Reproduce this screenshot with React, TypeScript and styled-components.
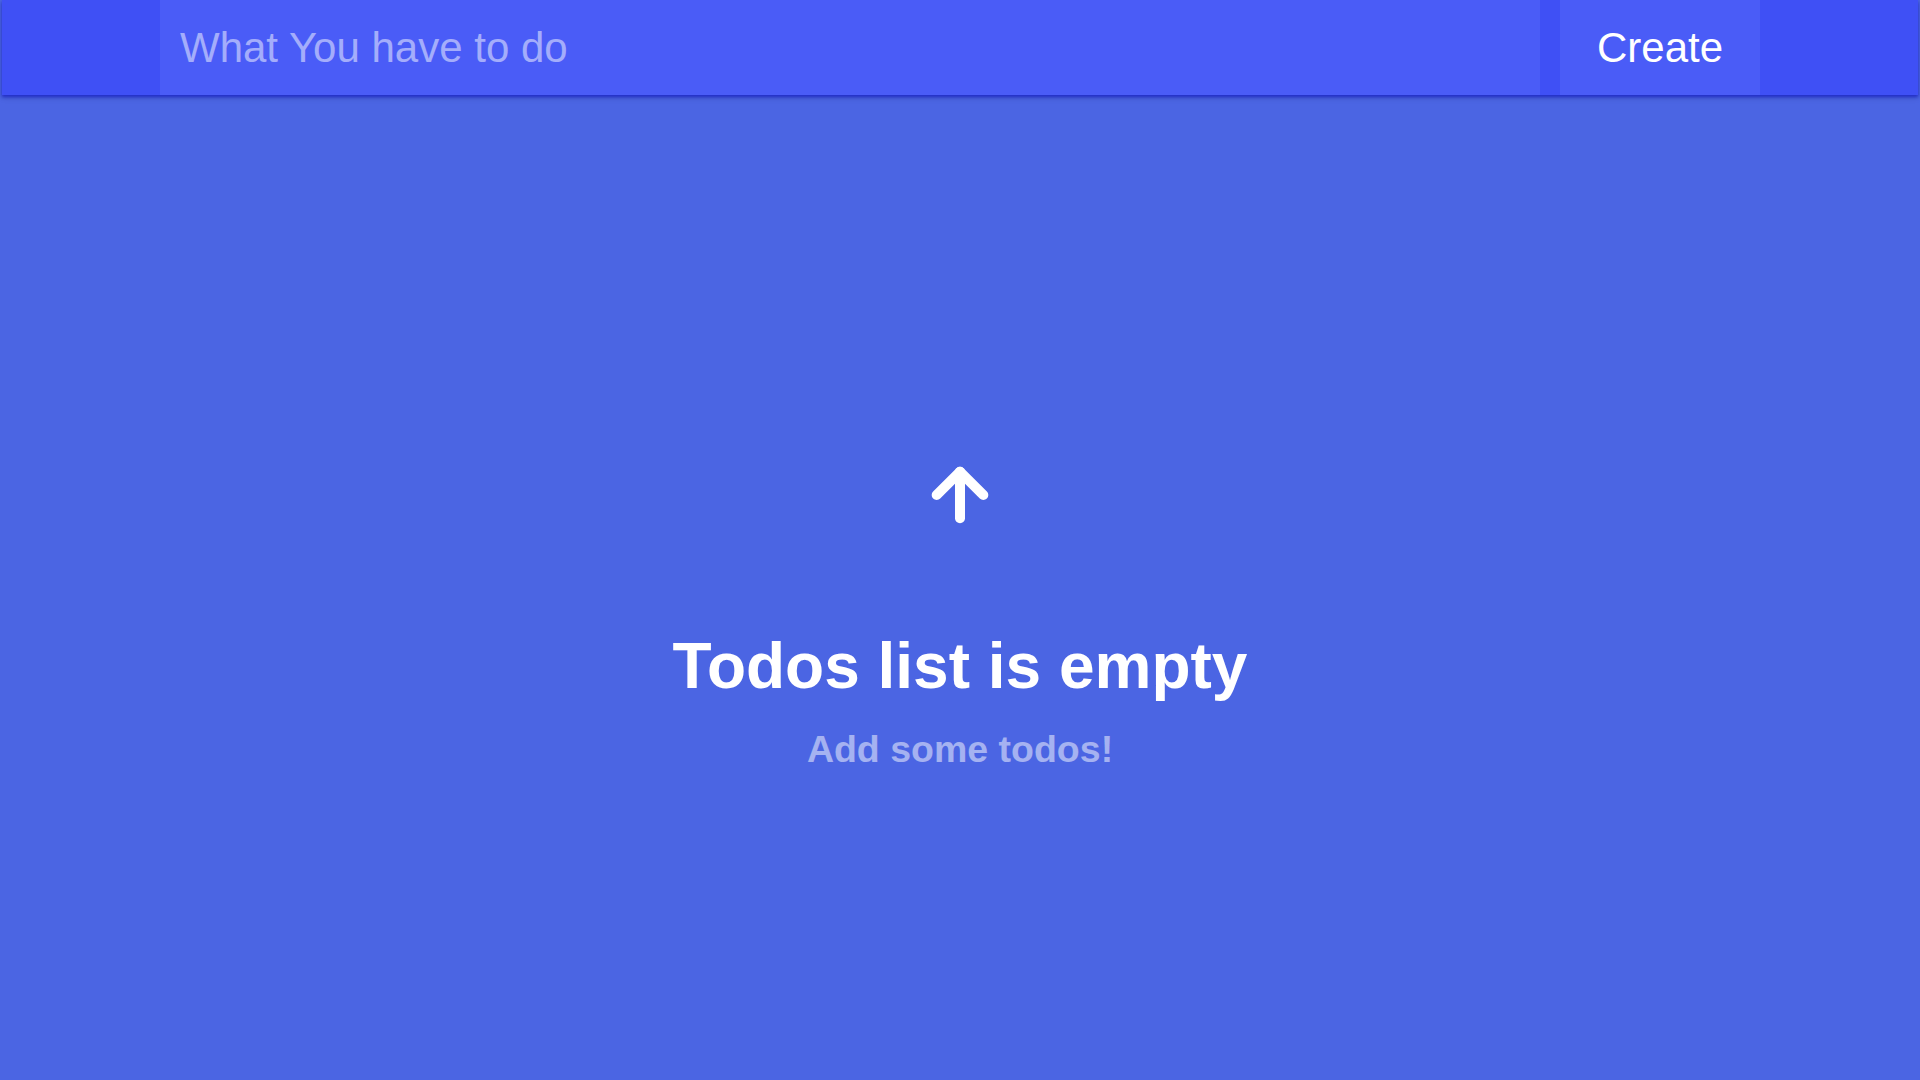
import React from "react";
import styled, { createGlobalStyle } from "styled-components";
import { ArrowUp } from "lucide-react";

const GlobalStyle = createGlobalStyle`
  html, body {
    margin: 0;
    padding: 0;
    background: #4b65e3;
    font-family: "Liberation Sans", Arial, sans-serif;
  }
  * { box-sizing: border-box; }
`;

const Page = styled.div`
  min-height: 100vh;
  background: #4b65e3;
  display: flex;
  flex-direction: column;
`;

const Header = styled.header`
  height: 95px;
  margin: 0 2px;
  background: #3f50f5;
  box-shadow: 0 2px 3px rgba(30, 40, 200, 0.9), 0 3px 6px rgba(0, 0, 0, 0.12);
  display: flex;
  justify-content: center;
`;

const Form = styled.form`
  width: 1600px;
  display: flex;
  gap: 20px;
`;

const TodoInput = styled.input`
  flex: 1;
  height: 95px;
  border: none;
  outline: none;
  padding: 0 0 0 20px;
  background: #4a5cf7;
  color: #ffffff;
  font-family: "Liberation Sans", Arial, sans-serif;
  font-size: 42px;
  &::placeholder {
    color: rgba(255, 255, 255, 0.5);
  }
`;

const CreateButton = styled.button`
  width: 200px;
  height: 95px;
  border: none;
  background: #4a5cf7;
  color: #ffffff;
  font-family: "Liberation Sans", Arial, sans-serif;
  font-size: 42px;
  cursor: pointer;
  padding: 0;
`;

const Empty = styled.main`
  flex: 1;
  display: flex;
  flex-direction: column;
  align-items: center;
  padding-top: 360px;
  color: #ffffff;
`;

const IconBox = styled.div`
  width: 80px;
  height: 80px;
  display: flex;
  color: #ffffff;
`;

const Title = styled.h1`
  margin: 94px 0 0;
  font-size: 64px;
  font-weight: 700;
  line-height: normal;
  color: #ffffff;
`;

const Subtitle = styled.h2`
  margin: 25px 0 0;
  font-size: 37.5px;
  font-weight: 700;
  line-height: normal;
  color: rgba(255, 255, 255, 0.5);
`;

export default function App() {
  return (
    <>
      <GlobalStyle />
      <Page>
        <Header>
          <Form onSubmit={(e) => e.preventDefault()}>
            <TodoInput placeholder="What You have to do" />
            <CreateButton type="submit">Create</CreateButton>
          </Form>
        </Header>
        <Empty>
          <IconBox>
            <ArrowUp size={80} strokeWidth={3} />
          </IconBox>
          <Title>Todos list is empty</Title>
          <Subtitle>Add some todos!</Subtitle>
        </Empty>
      </Page>
    </>
  );
}
